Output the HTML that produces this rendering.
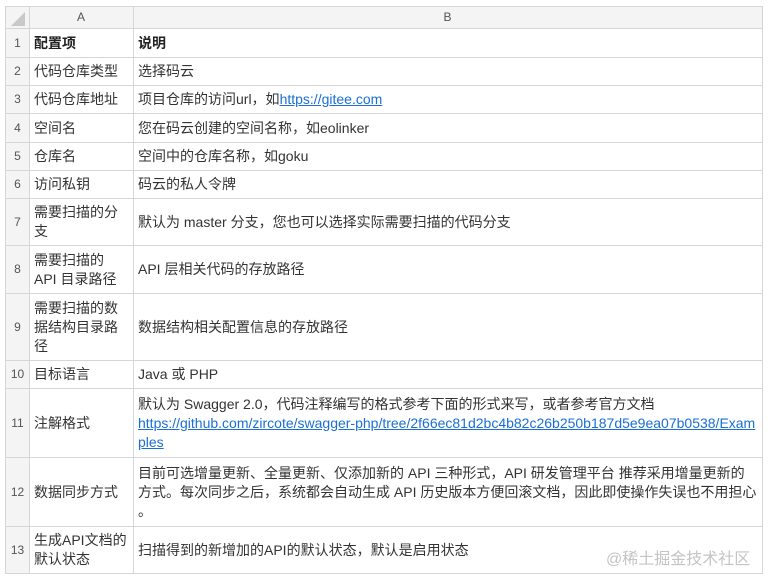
<!DOCTYPE html>
<html><head><meta charset="utf-8"><style>
body{margin:0;background:#fff;width:768px;height:583px;overflow:hidden;font-family:"Liberation Sans","Noto Sans CJK SC",sans-serif;font-size:14px;color:#333}
table{position:absolute;left:5px;top:6px;border-collapse:collapse;table-layout:fixed}
td{border:1px solid #d6d6d6;padding:0 5px 0 4px;line-height:19px;vertical-align:middle;word-break:break-all;overflow:hidden}
td.n{background:#f4f4f4;color:#555;text-align:center;padding:0;font-size:12px}
tr.h td{background:#f4f4f4;color:#555;text-align:center;font-size:12px}
a{color:#1a6fd6;text-decoration:underline}
b{font-weight:bold;color:#222}
.wm{position:absolute;left:606px;top:545px;color:#c4c4c4;font-size:16px}
</style></head><body>
<table>
<colgroup><col style="width:24px"><col style="width:104px"><col style="width:629px"></colgroup>
<tr class="h" style="height:22px"><td style="position:relative"><svg width="14" height="14" style="position:absolute;left:5px;top:5px"><polygon points="14,0 14,14 0,14" fill="#c8c8c8"/></svg></td><td>A</td><td>B</td></tr>
<tr style="height:29px"><td class="n">1</td><td><b>配置项</b></td><td><b>说明</b></td></tr>
<tr style="height:28px"><td class="n">2</td><td>代码仓库类型</td><td>选择码云</td></tr>
<tr style="height:28px"><td class="n">3</td><td>代码仓库地址</td><td>项目仓库的访问url，如<a>https://gitee.com</a></td></tr>
<tr style="height:29px"><td class="n">4</td><td>空间名</td><td>您在码云创建的空间名称，如eolinker</td></tr>
<tr style="height:28px"><td class="n">5</td><td>仓库名</td><td>空间中的仓库名称，如goku</td></tr>
<tr style="height:28px"><td class="n">6</td><td>访问私钥</td><td>码云的私人令牌</td></tr>
<tr style="height:47px"><td class="n">7</td><td>需要扫描的分<br>支</td><td>默认为 master 分支，您也可以选择实际需要扫描的代码分支</td></tr>
<tr style="height:48px"><td class="n">8</td><td>需要扫描的<br>API 目录路径</td><td>API 层相关代码的存放路径</td></tr>
<tr style="height:67px"><td class="n">9</td><td>需要扫描的数<br>据结构目录路<br>径</td><td>数据结构相关配置信息的存放路径</td></tr>
<tr style="height:28px"><td class="n">10</td><td>目标语言</td><td>Java 或 PHP</td></tr>
<tr style="height:69px"><td class="n">11</td><td>注解格式</td><td>默认为 Swagger 2.0，代码注释编写的格式参考下面的形式来写，或者参考官方文档<br><a>https://github.com/zircote/swagger-php/tree/2f66ec81d2bc4b82c26b250b187d5e9ea07b0538/Exam<br>ples</a></td></tr>
<tr style="height:69px"><td class="n">12</td><td>数据同步方式</td><td>目前可选增量更新、全量更新、仅添加新的 API 三种形式，API 研发管理平台 推荐采用增量更新的<br>方式。每次同步之后，系统都会自动生成 API 历史版本方便回滚文档，因此即使操作失误也不用担心<br>。</td></tr>
<tr style="height:47px"><td class="n">13</td><td>生成API文档的<br>默认状态</td><td>扫描得到的新增加的API的默认状态，默认是启用状态</td></tr>
</table>
<div class="wm">@稀土掘金技术社区</div>
</body></html>
